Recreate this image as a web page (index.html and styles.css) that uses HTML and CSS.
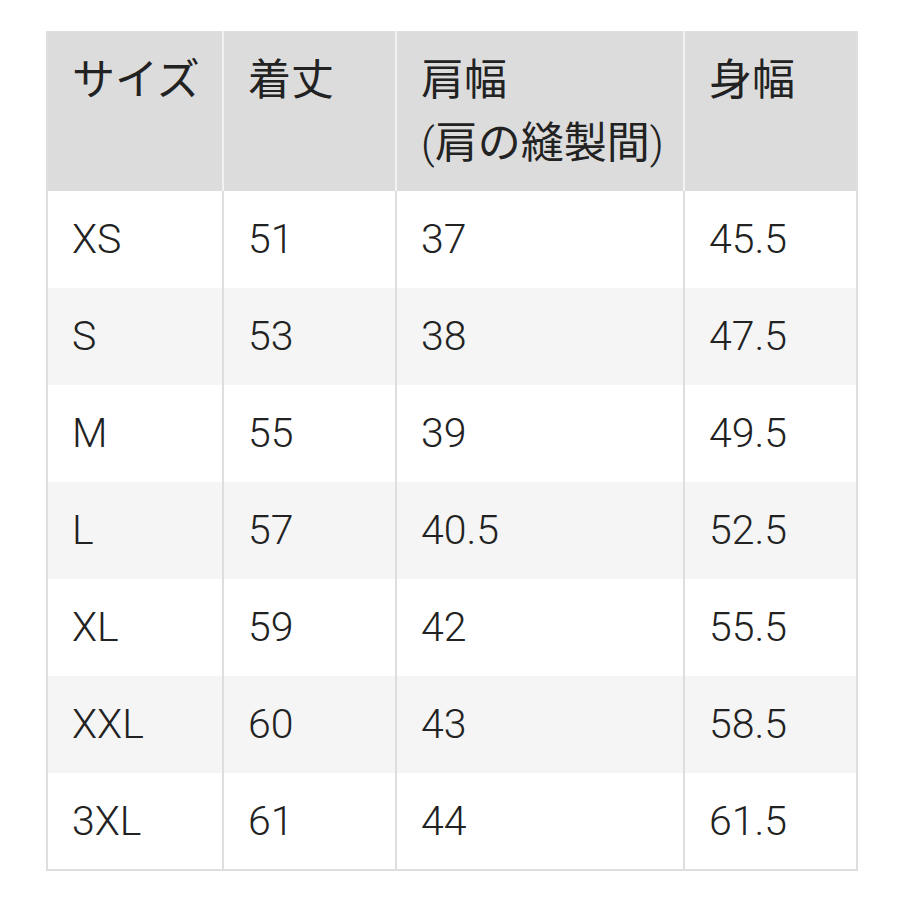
FILE: index.html
```html
<!DOCTYPE html>
<html lang="ja">
<head>
<meta charset="utf-8">
<link rel="stylesheet" href="styles.css">
</head>
<body>
<div class="wrap">
<table class="size-table">
<colgroup>
<col class="c1"><col class="c2"><col class="c3"><col class="c4">
</colgroup>
<thead>
<tr><th>サイズ</th><th>着丈</th><th>肩幅<br><span class="paren">(</span>肩の縫製間<span class="paren">)</span></th><th>身幅</th></tr>
</thead>
<tbody>
<tr><td>XS</td><td>51</td><td>37</td><td>45.5</td></tr>
<tr><td>S</td><td>53</td><td>38</td><td>47.5</td></tr>
<tr><td>M</td><td>55</td><td>39</td><td>49.5</td></tr>
<tr><td>L</td><td>57</td><td>40.5</td><td>52.5</td></tr>
<tr><td>XL</td><td>59</td><td>42</td><td>55.5</td></tr>
<tr><td>XXL</td><td>60</td><td>43</td><td>58.5</td></tr>
<tr><td>3XL</td><td>61</td><td>44</td><td>61.5</td></tr>
</tbody>
</table>
</div>
</body>
</html>
```
FILE: styles.css
```css
html, body {
  margin: 0;
  padding: 0;
  background: #ffffff;
}
.wrap {
  padding: 31px 0 0 46px;
}
.size-table {
  width: 810px;
  table-layout: fixed;
  border-collapse: collapse;
  border: 2px solid #dedede;
  font-family: Roboto, "Noto Sans CJK JP", sans-serif;
  font-size: 41px;
  line-height: 63px;
  color: #222222;
}
.c1 { width: 176px; }
.c2 { width: 173px; }
.c3 { width: 288px; }
.c4 { width: 173px; }
.size-table th,
.size-table td {
  text-align: left;
  padding: 0 0 0 24px;
  box-sizing: border-box;
}
.size-table th {
  font-weight: 400;
  font-size: 43px;
  background: #dcdcdc;
  vertical-align: top;
  padding-top: 16px;
  padding-bottom: 16px;
  height: 159px;
  border-left: 2px solid #f2f2f2;
}
.size-table th .paren {
  font-weight: 300;
}
.size-table th:first-child,
.size-table td:first-child {
  border-left: none;
}
.size-table td {
  height: 97px;
  vertical-align: middle;
  border-left: 2px solid #dedede;
  font-weight: 300;
}
.size-table tbody tr:nth-child(even) td {
  background: #f5f5f5;
}
```
